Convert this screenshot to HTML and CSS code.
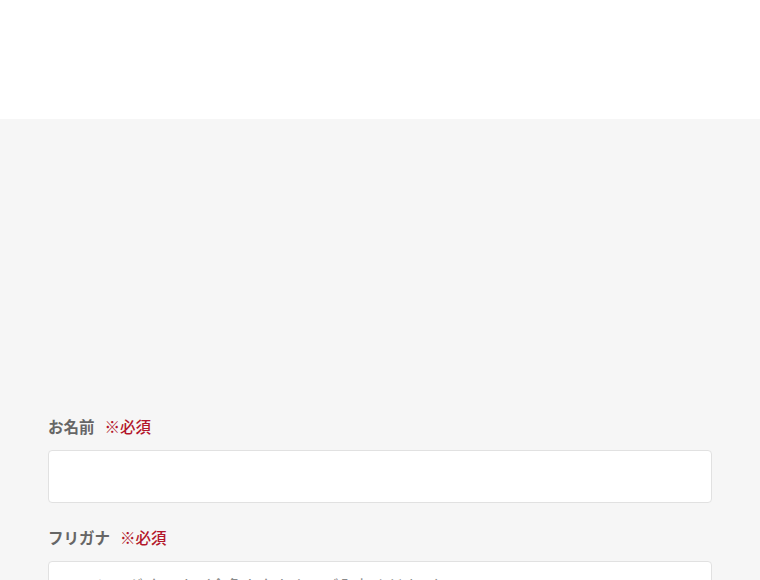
FILE: index.html
```html
<!DOCTYPE html>
<html lang="ja">
<head>
<meta charset="utf-8">
<link rel="stylesheet" href="styles.css">
</head>
<body>
<header class="top"></header>
<main class="form-area">
  <form class="form">
    <div class="field">
      <label class="label">お名前<span class="req">※必須</span></label>
      <input class="input" type="text">
    </div>
    <div class="field">
      <label class="label">フリガナ<span class="req">※必須</span></label>
      <input class="input" type="text" placeholder="ヤマダ タロウ（全角カタカナでご入力ください）">
    </div>
  </form>
</main>
</body>
</html>
```
FILE: styles.css
```css
* { box-sizing: border-box; }
html, body { margin: 0; padding: 0; }
body {
  font-family: "Noto Sans CJK JP", "Noto Sans", sans-serif;
  background: #f6f6f6;
  width: 760px;
  height: 580px;
  overflow: hidden;
}
.top {
  height: 119px;
  background: #ffffff;
}
.form-area {
  background: #f6f6f6;
  padding: 295px 48px 0;
}
.form {
  display: flex;
  flex-direction: column;
  gap: 22px;
}
.field {
  display: flex;
  flex-direction: column;
  gap: 12px;
}
.label {
  display: flex;
  align-items: center;
  height: 24px;
  font-size: 15.5px;
  font-weight: 700;
  color: #666666;
}
.req {
  margin-left: 10px;
  color: #b3172b;
  font-weight: 500;
}
.input {
  width: 664px;
  height: 53px;
  background: #ffffff;
  border: 1px solid #e1e1e1;
  border-radius: 4px;
  padding: 0 46px 5px;
  font-family: inherit;
  font-size: 16px;
  color: #333;
  outline: none;
}
.input::placeholder { color: #8a8a8a; }
```
